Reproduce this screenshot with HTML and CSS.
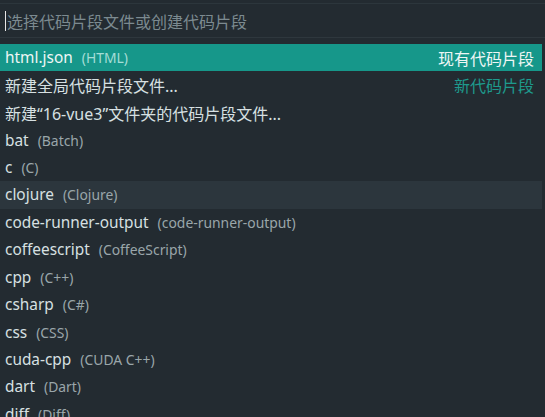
FILE: index.html
```html
<!DOCTYPE html>
<html>
<head>
<meta charset="utf-8">
<link rel="stylesheet" href="styles.css">
</head>
<body>
<div class="picker">
  <div class="input-row">
    <div class="input"><span class="caret"></span><span class="placeholder">选择代码片段文件或创建代码片段</span></div>
  </div>
  <div class="list">
    <div class="row selected"><span class="label">html.json</span><span class="desc">(HTML)</span><span class="detail">现有代码片段</span></div>
    <div class="row cjk"><span class="label">新建全局代码片段文件...</span><span class="detail teal">新代码片段</span></div>
    <div class="row cjk"><span class="label">新建“16-vue3”文件夹的代码片段文件...</span></div>
    <div class="row"><span class="label">bat</span><span class="desc">(Batch)</span></div>
    <div class="row"><span class="label">c</span><span class="desc">(C)</span></div>
    <div class="row hover"><span class="label">clojure</span><span class="desc">(Clojure)</span></div>
    <div class="row"><span class="label">code-runner-output</span><span class="desc">(code-runner-output)</span></div>
    <div class="row"><span class="label">coffeescript</span><span class="desc">(CoffeeScript)</span></div>
    <div class="row"><span class="label">cpp</span><span class="desc">(C++)</span></div>
    <div class="row"><span class="label">csharp</span><span class="desc">(C#)</span></div>
    <div class="row"><span class="label">css</span><span class="desc">(CSS)</span></div>
    <div class="row"><span class="label">cuda-cpp</span><span class="desc">(CUDA C++)</span></div>
    <div class="row"><span class="label">dart</span><span class="desc">(Dart)</span></div>
    <div class="row"><span class="label">diff</span><span class="desc">(Diff)</span></div>
  </div>
</div>
</body>
</html>
```

FILE: styles.css
```css
html, body {
  margin: 0;
  padding: 0;
  background: #232b31;
  overflow: hidden;
}
.picker {
  width: 545px;
  height: 417px;
  background: #232b31;
  font-family: "Noto Sans", "Noto Sans CJK SC", sans-serif;
  color: #d7e0e2;
  border-top: 1px solid #2c363c;
  margin-top: 3px;
}
.input-row {
  padding: 0 0 6px 0;
}
.input {
  height: 33px;
  border-bottom: 1px solid #2e373d;
  display: flex;
  align-items: center;
  padding-left: 5px;
}
.caret {
  width: 1px;
  height: 20px;
  background: #e6e6e6;
}
.placeholder {
  color: #7c8a90;
  font-size: 16px;
  margin-left: 1px;
}
.list {
  padding-right: 3px;
}
.row {
  height: 27.45px;
  display: flex;
  align-items: center;
  padding: 0 8px 0 5px;
  font-size: 15.4px;
  white-space: nowrap;
}
.row.cjk {
  font-size: 16px;
}
.row.selected {
  background: #16978a;
  color: #eef6f5;
}
.row.hover {
  background: #2c363d;
}
.desc {
  margin-left: 9px;
  font-size: 13.9px;
  color: #9aa6aa;
}
.row.selected .desc {
  color: #a5ddd6;
}
.detail {
  margin-left: auto;
  font-size: 16px;
}
.detail.teal {
  color: #1e9a8d;
}
```
